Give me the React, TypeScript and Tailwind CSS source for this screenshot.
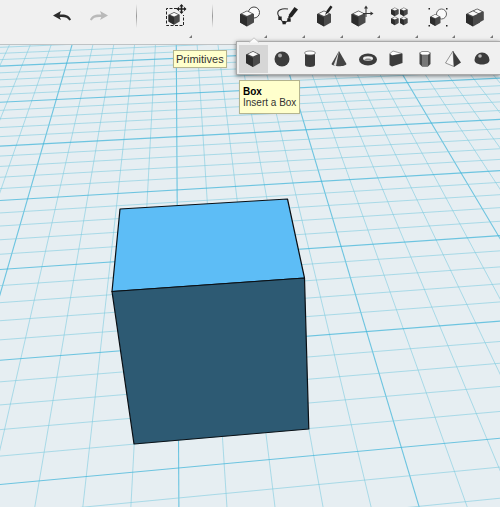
import type { ReactNode } from "react";

// plane -> screen projection of the work grid
const project = (u: number, v: number) => {
  const w = 1 + 0.0155 * u - 0.1065 * v;
  return {
    x: (134 * u - 18.56 * v + 176.8) / w,
    y: (-4.9 * u + 32.98 * v + 136.7) / w,
  };
};

const MINOR = 5;
const range = (from: number, to: number) =>
  Array.from({ length: to - from + 1 }, (_, i) => from + i);

interface GridLineProps {
  from: { x: number; y: number };
  to: { x: number; y: number };
  major: boolean;
}

const GridLine = ({ from, to, major }: GridLineProps) => (
  <line
    x1={from.x}
    y1={from.y}
    x2={to.x}
    y2={to.y}
    className={major ? "stroke-[#43b6d9]" : "stroke-[#7fcbe0]"}
    strokeWidth={major ? 1.1 : 1}
    strokeOpacity={major ? 0.75 : 0.6}
  />
);

const Scene = () => (
  <svg
    className="absolute inset-0 h-full w-full"
    viewBox="0 45 500 462"
    preserveAspectRatio="xMinYMin slice"
    role="img"
    aria-label="Work plane with a box"
  >
    {range(-30, 30).map((i) => (
      <GridLine
        key={`u${i}`}
        from={project(i / MINOR, -5)}
        to={project(i / MINOR, 6)}
        major={i % MINOR === 0}
      />
    ))}
    {range(-25, 30).map((i) => (
      <GridLine
        key={`v${i}`}
        from={project(-6, i / MINOR)}
        to={project(6, i / MINOR)}
        major={i % MINOR === 0}
      />
    ))}
    <g stroke="#0a0f14" strokeWidth="1.2" strokeLinejoin="round">
      <path d="M120 209 287.5 199 304.5 278 112 291.5Z" fill="#5dbdf6" />
      <path d="M112 291.5 304.5 278 308.8 429 134 444Z" fill="#2d5a73" />
    </g>
  </svg>
);

const Cube = ({ x = 0, y = 0, s = 1 }: { x?: number; y?: number; s?: number }) => (
  <g transform={`translate(${x} ${y}) scale(${s})`}>
    <path d="M0 3.5 7 0l7 3.5V12l-7 4-7-4Z" fill="#4a4a4a" />
    <path d="M0 3.5 7 7V16l-7-4Z" fill="#2c2c2c" />
    <path d="M2 3.300 7 .8l5 2.500-5 2.300Z" fill="#fafafa" />
  </g>
);

const Icon = ({ children }: { children: ReactNode }) => (
  <svg className="h-6 w-6 shrink-0" viewBox="0 0 24 24" fill="none" aria-hidden="true">
    {children}
  </svg>
);

const Undo = () => (
  <Icon>
    <path d="M3 11.500 11 7l-1.300 3.500c6-.5 10 1 11.300 5.300l-1.700.7c-1.500-3-4.500-3.800-9.600-3.500L11 16Z" fill="#2b2b2b" />
  </Icon>
);

const Redo = () => (
  <Icon>
    <path d="M21 11.500 13 7l1.300 3.500c-6-.5-10 1-11.300 5.300l1.700.7c1.500-3 4.500-3.800 9.600-3.500L13 16Z" fill="#b9b9b9" />
  </Icon>
);

const Transform = () => (
  <Icon>
    <path d="M14 4.500H3.500v17h17V11" stroke="#222" strokeDasharray="3 1.500" />
    <Cube x={5.5} y={8} s={0.8} />
    <path d="M18.500 1v8M14.500 5h8" stroke="#222" strokeWidth="1.500" />
    <path d="m18.500 0 2.200 2.500h-4.400ZM18.500 10l2.200-2.500h-4.400ZM13.500 5 16 2.800v4.400ZM23.500 5 21 2.800v4.400Z" fill="#222" />
  </Icon>
);

const Primitives = () => (
  <Icon>
    <circle cx="16" cy="8.500" r="5.500" fill="#fafafa" stroke="#444" />
    <Cube x={2} y={6.5} />
  </Icon>
);

const Sketch = () => (
  <Icon>
    <path d="M13 5C7 4 1.500 6 3 10.500l2 4 4 5 5-3.500V12" stroke="#333" strokeWidth="1.100" />
    <path d="M3.300 12.500h3.400v3.500H3.300ZM7.500 17h3.300v3.300H7.500ZM12.300 14.300h3.400v3.400h-3.400Z" fill="#222" />
    <path d="m19.500 3 3.500 2.500-6 7.500-3.500 1.500.5-4Z" fill="#222" />
  </Icon>
);

const Construct = () => (
  <Icon>
    <Cube x={4} y={6.5} />
    <path d="m17.500 1.500 2 1.500-3.500 5-4 3 1.800-4.500Z" fill="#222" />
  </Icon>
);

const Modify = () => (
  <Icon>
    <Cube x={1.5} y={6.5} />
    <path d="M16 13V4M13 9.500h8" stroke="#333" />
    <path d="m16 1.500 2 3h-4ZM23.500 9.500l-3-2v4Z" fill="#333" />
  </Icon>
);

const Pattern = () => (
  <Icon>
    <Cube x={3} y={3.5} s={0.55} />
    <Cube x={12} y={3.5} s={0.55} />
    <Cube x={3} y={12.5} s={0.55} />
    <Cube x={12} y={12.5} s={0.55} />
  </Icon>
);

const Grouping = () => (
  <Icon>
    <circle cx="15.500" cy="10" r="5" fill="#fafafa" stroke="#555" strokeWidth=".9" />
    <Cube x={4} y={10} s={0.75} />
    <path d="M2.500 4h1.500v1.500H2.500ZM20 4h1.500v1.500H20ZM2.500 21h1.500v1.500H2.500ZM20 21h1.500v1.500H20Z" fill="#222" />
  </Icon>
);

const Combine = () => (
  <Icon>
    <Cube x={7.5} y={4.5} s={0.95} />
    <Cube x={3} y={6.5} />
  </Icon>
);

const BoxShape = () => (
  <Icon>
    <Cube x={5} y={4} />
  </Icon>
);

const SphereShape = () => (
  <Icon>
    <circle cx="12" cy="12" r="7.500" fill="#3c3c3c" />
    <circle cx="10" cy="8.500" r="2" fill="#aaa" />
  </Icon>
);

const CylinderShape = () => (
  <Icon>
    <path d="M7 6v12c0 2.500 10 2.500 10 0V6Z" fill="#3c3c3c" />
    <ellipse cx="12" cy="6" rx="5.500" ry="2" fill="#fff" stroke="#666" strokeWidth=".7" />
  </Icon>
);

const ConeShape = () => (
  <Icon>
    <path d="M12 4 4.500 17c1 3 14 3 15 0Z" fill="#444" />
    <path d="M12 4 6.500 18.500l2.500.5Z" fill="#ddd" />
  </Icon>
);

const TorusShape = () => (
  <Icon>
    <ellipse cx="12" cy="12.500" rx="9" ry="6" fill="#3c3c3c" />
    <ellipse cx="12" cy="11.500" rx="5" ry="2.200" fill="#eee" />
    <path d="M8 12.500c2-1.500 6-1.500 8 0-2 1-6 1-8 0Z" fill="#888" />
  </Icon>
);

const WedgeShape = () => (
  <Icon>
    <path d="M6 6.500 9 4l9 2.500L8 9Z" fill="#fff" stroke="#666" strokeWidth=".6" />
    <path d="M5.500 6.500 8 8.500l10.500-2V16L8 19.500 5.500 18Z" fill="#3c3c3c" />
  </Icon>
);

const PrismShape = () => (
  <Icon>
    <path d="M6.500 6 9 4.500h6L17.500 6v11L15 19.500H9L6.500 17Z" fill="#444" />
    <path d="M9 8h6v11.500H9Z" fill="#777" />
    <path d="M6.500 6 9 4.500h6L17.500 6 15 8H9Z" fill="#fff" stroke="#666" strokeWidth=".6" />
  </Icon>
);

const PyramidShape = () => (
  <Icon>
    <path d="M12 4 4.500 16 13 19.500Z" fill="#f4f4f4" stroke="#555" strokeWidth=".6" />
    <path d="m12 4 1 16 7-4.500Z" fill="#3c3c3c" />
  </Icon>
);

const HemisphereShape = () => (
  <Icon>
    <path d="M4.500 13a7.500 7.500 0 0 1 15 0c0 6-15 6-15 0Z" fill="#3c3c3c" />
    <circle cx="10" cy="9" r="1.800" fill="#bbb" />
  </Icon>
);

interface Tool {
  label: string;
  icon: () => ReactNode;
  menu?: boolean;
}

const tools: (Tool | null)[] = [
  { label: "Undo", icon: Undo },
  { label: "Redo", icon: Redo },
  null,
  { label: "Transform", icon: Transform, menu: true },
  null,
  { label: "Primitives", icon: Primitives, menu: true },
  { label: "Sketch", icon: Sketch, menu: true },
  { label: "Construct", icon: Construct, menu: true },
  { label: "Modify", icon: Modify, menu: true },
  { label: "Pattern", icon: Pattern, menu: true },
  { label: "Grouping", icon: Grouping, menu: true },
  { label: "Combine", icon: Combine, menu: true },
];

const shapes: Tool[] = [
  { label: "Box", icon: BoxShape },
  { label: "Sphere", icon: SphereShape },
  { label: "Cylinder", icon: CylinderShape },
  { label: "Cone", icon: ConeShape },
  { label: "Torus", icon: TorusShape },
  { label: "Wedge", icon: WedgeShape },
  { label: "Prism", icon: PrismShape },
  { label: "Pyramid", icon: PyramidShape },
  { label: "Hemisphere", icon: HemisphereShape },
];

const Toolbar = () => (
  <header className="flex h-[45px] border-b border-[#bfc3c5] bg-[#f0f0f0] pr-1.5 pl-[43px]">
    {tools.map((tool, i) =>
      tool ? (
        <button
          key={tool.label}
          aria-label={tool.label}
          className="relative flex flex-1 cursor-pointer justify-center pt-1"
        >
          <tool.icon />
          {tool.menu && (
            <svg className="absolute right-px bottom-[6px] h-[3px] w-[3px]" viewBox="0 0 3 3" aria-hidden="true">
              <path d="M3 0v3H0Z" fill="#777" />
            </svg>
          )}
        </button>
      ) : (
        <div key={i} className="flex flex-1 justify-center pt-1">
          <div className="h-6 w-px bg-linear-to-b from-transparent via-[#999] to-transparent" />
        </div>
      ),
    )}
  </header>
);

const ShapeMenu = () => (
  <div className="absolute top-[41px] right-0 left-[236px] z-10 flex h-[34px] border border-r-0 border-[#aaa] bg-[#f0f0f0] pt-[3px] pr-1 pb-px pl-0.5 shadow-[0_1px_4px_rgba(0,0,0,0.5)]">
    <svg className="absolute -top-[5px] left-3 h-[6px] w-[10px]" viewBox="0 0 10 6" aria-hidden="true">
      <path d="M0 5.500 5 .8l5 4.700" fill="#fafafa" stroke="#bbb" strokeWidth=".8" />
    </svg>
    {shapes.map((shape, i) => (
      <button
        key={shape.label}
        aria-label={shape.label}
        className={`flex flex-1 cursor-pointer items-center justify-center ${i === 0 ? "bg-[#d6d6d6]" : ""}`}
      >
        <shape.icon />
      </button>
    ))}
  </div>
);

const App = () => {
  return (
    <div className="relative flex min-h-screen flex-col overflow-hidden bg-[#e6eef2] font-['Liberation_Sans',sans-serif] text-[#333]">
      <Toolbar />
      <main className="relative flex-1">
        <Scene />
      </main>
      <ShapeMenu />
      <div
        role="tooltip"
        className="absolute top-[50px] left-[173px] border border-[#b5b58f] bg-[#ffffcc] px-0.5 text-[11px] leading-4 shadow-xs"
      >
        Primitives
      </div>
      <div
        role="tooltip"
        className="absolute top-20 left-[239px] border border-[#b5b58f] bg-[#ffffcc] px-[3px] py-[5px] text-[10px] leading-[11px] shadow-xs"
      >
        <p className="font-bold text-black">Box</p>
        <p>Insert a Box</p>
      </div>
    </div>
  );
};

export default App;
